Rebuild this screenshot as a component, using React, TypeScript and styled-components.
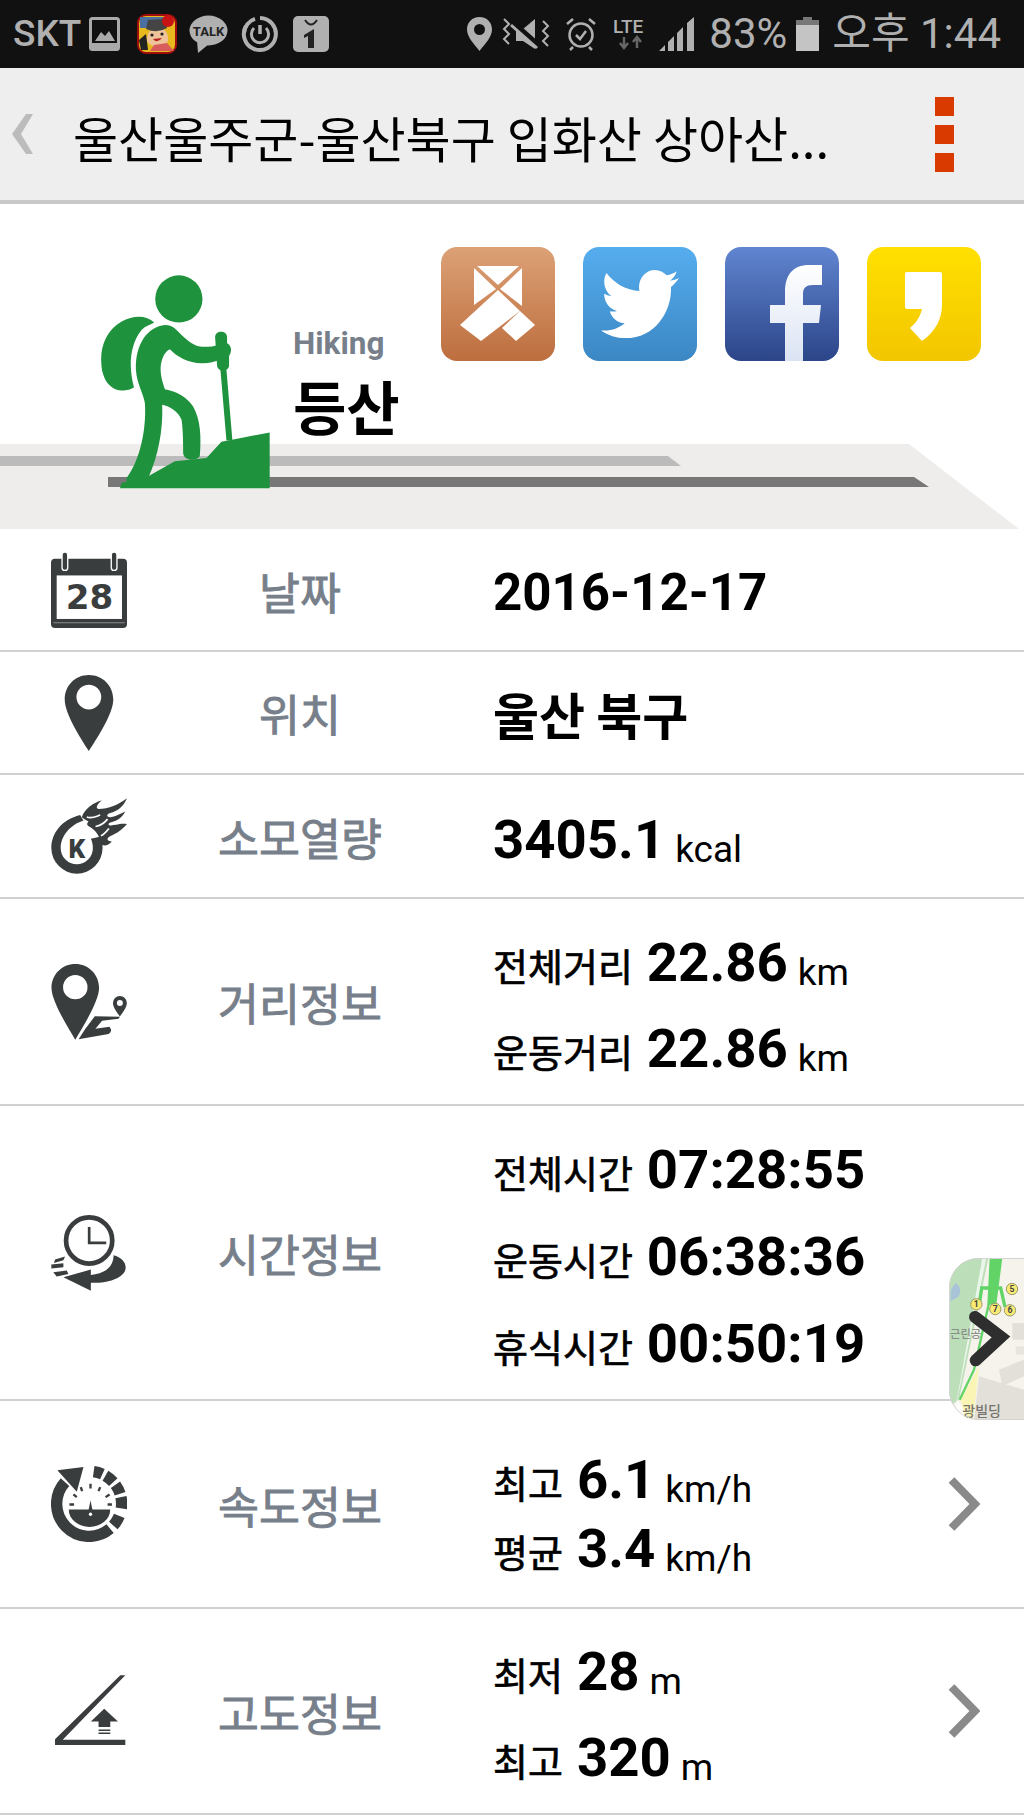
import React from "react";
import styled, { createGlobalStyle } from "styled-components";
import { FaTwitter } from "react-icons/fa";

const GlobalStyle = createGlobalStyle`
  html, body {
    margin: 0;
    padding: 0;
    background: #fff;
  }
  body {
    width: 1024px;
    height: 1820px;
    overflow: hidden;
    font-family: Roboto, "Noto Sans CJK KR", sans-serif;
  }
`;

const Page = styled.div`
  width: 1024px;
  height: 1820px;
  background: #fff;
  overflow: hidden;
`;

const StatusBar = styled.div`
  height: 68px;
  background: #111;
  display: flex;
  align-items: center;
  justify-content: space-between;
  padding: 0 23px 0 13px;
  box-sizing: border-box;
  color: #b0b0b0;
`;

const StatusGroup = styled.div`
  display: flex;
  align-items: center;
`;

const StatusText = styled.span<{ $ml?: number; $weight?: number; $size?: number }>`
  font-family: Roboto, "Noto Sans CJK KR", sans-serif;
  font-size: ${(p) => p.$size ?? 42}px;
  line-height: 68px;
  font-weight: ${(p) => p.$weight ?? 400};
  margin-left: ${(p) => p.$ml ?? 0}px;
  white-space: nowrap;
`;

const StatusIcon = styled.svg<{ $ml?: number }>`
  display: block;
  flex: none;
  overflow: visible;
  margin-left: ${(p) => p.$ml ?? 0}px;
`;

const Header = styled.header`
  height: 136px;
  box-sizing: border-box;
  background: #eee;
  border-bottom: 4px solid #c8c8c8;
  display: flex;
  align-items: center;
  padding: 0 70px 0 12px;
`;

const BackIcon = styled.svg`
  width: 21px;
  height: 40px;
  flex: none;
  margin-right: 40px;
`;

const Title = styled.h1`
  flex: 1;
  margin: 0;
  padding-top: 4px;
  font-family: "Noto Sans CJK KR", sans-serif;
  font-size: 49px;
  font-weight: 400;
  color: #000;
  white-space: nowrap;
`;

const MoreDots = styled.div`
  display: flex;
  flex-direction: column;
  gap: 9px;
`;

const MoreDot = styled.span`
  width: 19px;
  height: 19px;
  background: #d93a00;
`;

const Hero = styled.div`
  position: relative;
  height: 326px;
`;

const Ground = styled.svg`
  position: absolute;
  left: 0;
  bottom: 1px;
  width: 1024px;
  height: 85px;
`;

const HeroRow = styled.div`
  position: relative;
  display: flex;
  align-items: flex-start;
  padding: 0 43px 0 100px;
`;

const Hiker = styled.svg`
  width: 173px;
  height: 217px;
  margin-top: 69px;
  flex: none;
`;

const SportName = styled.div`
  margin: 121px 0 0 20px;
  display: flex;
  flex-direction: column;
  gap: 6px;
`;

const SportEn = styled.span`
  font-family: Roboto, sans-serif;
  font-size: 31.5px;
  line-height: 38px;
  font-weight: 700;
  color: #777f8a;
`;

const SportKo = styled.span`
  font-family: "Noto Sans CJK KR", sans-serif;
  font-size: 58px;
  line-height: 72px;
  font-weight: 700;
  color: #000;
`;

const Socials = styled.div`
  margin: 43px 0 0 auto;
  display: flex;
  gap: 28px;
`;

const Tile = styled.div<{ $top: string; $bottom: string }>`
  width: 114px;
  height: 114px;
  border-radius: 16px;
  overflow: hidden;
  display: flex;
  align-items: center;
  justify-content: center;
  background: linear-gradient(${(p) => p.$top}, ${(p) => p.$bottom});
`;

const TileArt = styled.svg`
  display: block;
  width: 114px;
  height: 114px;
`;

const TwitterBird = styled(FaTwitter)`
  display: block;
  width: 78px;
  height: 84px;
  color: #fff;
`;

const Row = styled.section<{ $h: number }>`
  position: relative;
  height: ${(p) => p.$h}px;
  box-sizing: border-box;
  border-bottom: 2px solid #d0d0d0;
  display: grid;
  grid-template-columns: 178px 244px 1fr auto;
  align-items: center;
`;

const IconCell = styled.div`
  display: flex;
  justify-content: center;
  align-items: center;
`;

const RowIcon = styled.svg`
  display: block;
  width: 76px;
  height: 76px;
`;

const Label = styled.div`
  text-align: center;
  font-family: "Noto Sans CJK KR", sans-serif;
  font-size: 44.5px;
  font-weight: 400;
  -webkit-text-stroke: 0.9px #777f8a;
  color: #777f8a;
`;

const Values = styled.div<{ $gap: number; $shift?: number }>`
  padding-left: 71px;
  padding-top: ${(p) => p.$shift ?? 6}px;
  display: flex;
  flex-direction: column;
  gap: ${(p) => p.$gap}px;
`;

const Line = styled.div`
  height: 60px;
  display: flex;
  align-items: baseline;
  line-height: 60px;
  white-space: nowrap;
`;

const Lead = styled.span`
  font-family: "Noto Sans CJK KR", sans-serif;
  font-size: 38px;
  font-weight: 400;
  -webkit-text-stroke: 0.7px #000;
  color: #000;
  margin-right: 14px;
`;

const Big = styled.span<{ $size?: number }>`
  font-family: Roboto, "Noto Sans CJK KR", sans-serif;
  font-size: ${(p) => p.$size ?? 54.5}px;
  font-weight: 700;
  color: #000;
`;

const Place = styled.span`
  font-family: "Noto Sans CJK KR", sans-serif;
  font-size: 50px;
  font-weight: 700;
  color: #000;
`;

const Unit = styled.span`
  font-family: Roboto, sans-serif;
  font-size: 37px;
  font-weight: 400;
  color: #000;
  margin-left: 10px;
  position: relative;
  top: 4px;
`;

const Chevron = styled.svg`
  display: block;
  width: 32px;
  height: 54px;
  margin-right: 44px;
`;

const MapThumb = styled.svg`
  position: absolute;
  right: 0;
  top: 152px;
  width: 75px;
  height: 162px;
`;

const ink = "#3a3d3e";

function StatusLeft() {
  return (
    <StatusGroup>
      <StatusText $weight={500} $size={37}>SKT</StatusText>
      <StatusIcon $ml={8} width="31" height="34" viewBox="0 0 31 34">
        <rect x="1.5" y="1.5" width="28" height="31" rx="2" fill="none" stroke="#aaa" strokeWidth="3" />
        <rect x="1" y="26" width="29" height="7" fill="#aaa" />
        <path d="M6 24 L12 15 L16 19 L20 14 L26 24 Z" fill="#aaa" />
      </StatusIcon>
      <StatusIcon $ml={17} width="40" height="40" viewBox="0 0 40 40">
        <rect x="1" y="1" width="38" height="38" rx="8" fill="#e7b91d" stroke="#a00d0d" strokeWidth="2" />
        <path d="M3 3 H30 V14 H3 Z" fill="#4a6fa0" />
        <path d="M2 26 L9 20 L11 36 H4 Z" fill="#222" />
        <path d="M10 27 Q10 14 21 14 Q32 15 31 27 Q28 33 20 33 Q13 32 10 27 Z" fill="#eec39a" />
        <path d="M9 15 L11 6 L27 5 L30 14 Q20 20 9 15 Z" fill="#444" />
        <path d="M13 37 L17 31 L30 29 L37 37 Z" fill="#d85c5c" />
        <circle cx="31" cy="7" r="6" fill="#c81414" />
        <path d="M16 25 Q20 30 25 24 Z" fill="#b42020" />
        <circle cx="15" cy="21" r="1.6" fill="#222" />
        <circle cx="25" cy="20" r="1.6" fill="#222" />
      </StatusIcon>
      <StatusIcon $ml={12} width="39" height="38" viewBox="0 0 39 38">
        <ellipse cx="19.5" cy="15.5" rx="19" ry="15" fill="#b0b0b0" />
        <path d="M8 25 L9 38 L20 29 Z" fill="#b0b0b0" />
        <text x="19.5" y="20.5" textAnchor="middle" fontFamily="Roboto, sans-serif" fontWeight="700" fontSize="13" fill="#222">
          TALK
        </text>
      </StatusIcon>
      <StatusIcon $ml={14} width="36" height="38" viewBox="0 0 36 38">
        <path d="M18 3 A16 16 0 1 1 4 11" fill="none" stroke="#b0b0b0" strokeWidth="4" />
        <path d="M2 18 A16 16 0 0 1 13 3.8" fill="none" stroke="#b0b0b0" strokeWidth="4" />
        <path d="M18 10 V19" stroke="#b0b0b0" strokeWidth="3.5" />
        <path d="M12 13 A8.6 8.6 0 1 0 24 13" fill="none" stroke="#b0b0b0" strokeWidth="3" />
      </StatusIcon>
      <StatusIcon $ml={15} width="36" height="36" viewBox="0 0 36 36">
        <rect width="36" height="36" rx="5" fill="#b0b0b0" />
        <path d="M12 4 Q18 13 24 4" fill="none" stroke="#222" strokeWidth="2" />
        <path d="M11 19 L21 13 V32 H15 V20 L11 22 Z" fill="#222" />
      </StatusIcon>
    </StatusGroup>
  );
}

function StatusRight() {
  return (
    <StatusGroup>
      <StatusIcon width="25" height="34" viewBox="0 0 25 34">
        <path fillRule="evenodd" d="M12.5 0 C20 0 25 5.5 25 12.5 C25 20 18 27 12.5 34 C7 27 0 20 0 12.5 C0 5.5 5 0 12.5 0 Z M12.5 7 A5.5 5.5 0 1 0 12.5 18 A5.5 5.5 0 1 0 12.5 7 Z" fill="#b0b0b0" />
      </StatusIcon>
      <StatusIcon $ml={10} width="52" height="34" viewBox="0 0 52 34">
        <path d="M2 2 L7 7 L2 12 L7 17 L2 22 L7 27" fill="none" stroke="#b0b0b0" strokeWidth="2" />
        <path d="M14 12 H21 L33 2 V32 L21 24 H14 Z" fill="#b0b0b0" />
        <path d="M11 6 L38 30" stroke="#111" strokeWidth="6" />
        <path d="M9 8 L35 31" stroke="#b0b0b0" strokeWidth="3" />
        <path d="M41 4 L46 9 L41 14 L46 19 L41 24 L46 29" fill="none" stroke="#b0b0b0" strokeWidth="2" />
      </StatusIcon>
      <StatusIcon $ml={12} width="30" height="34" viewBox="0 0 30 34">
        <circle cx="15" cy="18" r="11.5" fill="none" stroke="#b0b0b0" strokeWidth="2.5" />
        <path d="M10 18 L14 22 L20 14" fill="none" stroke="#b0b0b0" strokeWidth="2.5" />
        <path d="M1 7 L7 2 M29 7 L23 2 M7 30 L4 33 M23 30 L26 33" stroke="#b0b0b0" strokeWidth="2.5" />
      </StatusIcon>
      <StatusIcon $ml={17} width="37" height="34" viewBox="0 0 37 34">
        <text x="0" y="16" fontFamily="Roboto, sans-serif" fontWeight="500" fontSize="19" fill="#b0b0b0">
          LTE
        </text>
        <path d="M11 20 V29 M7 26 L11 31 L15 26" fill="none" stroke="#666" strokeWidth="2.5" />
        <path d="M24 31 V22 M20 25 L24 20 L28 25" fill="none" stroke="#666" strokeWidth="2.5" />
      </StatusIcon>
      <StatusIcon $ml={9} width="35" height="34" viewBox="0 0 35 34">
        <path d="M0 34 L6 28 V34 Z M9 25 L15 19 V34 H9 Z M18 16 L24 10 V34 H18 Z M28 6 L35 0 V34 H28 Z" fill="#b0b0b0" />
      </StatusIcon>
      <StatusText $ml={15}>83%</StatusText>
      <StatusIcon $ml={9} width="23" height="34" viewBox="0 0 23 34">
        <rect x="7" y="0" width="9" height="4" fill="#777" />
        <rect x="0" y="3" width="23" height="5" fill="#777" />
        <rect x="0" y="8" width="23" height="26" fill="#c4c4c4" />
      </StatusIcon>
      <StatusText $ml={13}>오후 1:44</StatusText>
    </StatusGroup>
  );
}

function HikerArt() {
  return (
    <Hiker viewBox="300 130 520 650">
      <g fill="#1f923d">
        <circle cx="537" cy="207" r="71" />
        <path d="M463 278 C440 255 400 255 365 275 C320 300 300 350 304 400 C305 440 325 480 365 482 C380 482 395 478 402 472 C388 420 385 350 425 300 C435 290 450 285 463 278 Z" />
        <path d="M495 285 C445 290 405 340 408 420 C410 460 430 490 435 520 C440 600 420 690 380 745 L380 760 L445 745 C475 680 490 600 487 525 C510 530 535 545 545 570 C550 600 550 650 550 670 C552 695 590 695 600 680 C605 620 602 570 580 530 C560 500 530 485 495 478 C485 450 478 420 485 395 C490 375 500 362 510 358 C530 380 570 402 610 400 C630 400 645 395 655 392 L655 345 C640 350 620 352 600 350 C575 345 550 320 530 300 C520 290 510 285 495 285 Z" />
        <path d="M662 420 L680 420 L698 632 L680 632 Z" />
        <path d="M646 322 C646 300 682 300 682 322 L682 340 C692 345 700 360 688 378 L688 408 C685 428 655 428 652 408 L650 380 Z" />
        <path d="M810 608 L810 776 L360 776 L365 760 L445 740 L525 695 L620 685 L665 636 L697 630 Z" />
      </g>
    </Hiker>
  );
}

function RibbonArt() {
  return (
    <TileArt viewBox="0 0 114 114">
      <g fill="#fff">
        <path d="M36 19 H78 L57 38 Z" />
        <path d="M33 21 L55 42 L33 58 Z" />
        <path d="M81 21 V59 L59 42 Z" />
        <path d="M19 78 L57 43 L79 64 L40 94 Z" />
        <path d="M61 81 L79 64 L94 78 L75 94 Z" />
      </g>
    </TileArt>
  );
}

function FacebookArt() {
  return (
    <TileArt viewBox="0 0 114 114">
      <defs>
        <linearGradient id="fbf" x1="0" y1="0" x2="0" y2="1">
          <stop offset="0" stopColor="#fff" />
          <stop offset="1" stopColor="#dbe3f3" />
        </linearGradient>
      </defs>
      <path fill="url(#fbf)" d="M60 114 V76 H45 V58 H60 V44 C60 28 68 18 84 18 H97 V38 H88 C81 38 78 41 78 47 V58 H96 L94 76 H78 V114 Z" />
    </TileArt>
  );
}

function KakaoArt() {
  return (
    <TileArt viewBox="0 0 114 114">
      <path fill="#fff" d="M38 27 Q38 25 40 25 H73 Q75 25 75 27 V58 C75 72 68 85 55 94 L43 81 C49 76 53 70 55 62 H40 Q38 62 38 60 Z" />
    </TileArt>
  );
}

function arcPath(from: number, to: number, r = 97, cx = 177, cy = 188) {
  const a = (from * Math.PI) / 180;
  const b = (to * Math.PI) / 180;
  const p = (n: number) => n.toFixed(1);
  return `M${p(cx + r * Math.cos(a))} ${p(cy + r * Math.sin(a))} A${r} ${r} 0 0 1 ${p(cx + r * Math.cos(b))} ${p(cy + r * Math.sin(b))}`;
}

function CalendarIcon() {
  return (
    <RowIcon viewBox="63 35 227 227">
      <rect x="63" y="55" width="227" height="207" rx="12" fill={ink} />
      <rect x="80" y="105" width="195" height="130" fill="#fff" />
      <path d="M70 246 H283" stroke="#8a8c8d" strokeWidth="3" />
      <rect x="96" y="35" width="17" height="55" rx="8" fill={ink} stroke="#fff" strokeWidth="4" />
      <rect x="243" y="35" width="17" height="55" rx="8" fill={ink} stroke="#fff" strokeWidth="4" />
      <text x="178" y="206" textAnchor="middle" fontFamily="'DejaVu Sans', sans-serif" fontWeight="700" fontSize="102" fill={ink}>
        28
      </text>
    </RowIcon>
  );
}

function PinIcon() {
  return (
    <RowIcon viewBox="60 405 227 227">
      <path fillRule="evenodd" fill={ink} d="M173 405 C215 405 246 438 246 478 C246 520 200 590 173 632 C146 590 101 520 101 478 C101 438 131 405 173 405 Z M173 434 A37 37 0 1 0 173 508 A37 37 0 1 0 173 434 Z" />
    </RowIcon>
  );
}

function FireIcon() {
  return (
    <RowIcon viewBox="63 775 227 227">
      <path fillRule="evenodd" fill={ink} d="M140 1001 A77 77 0 0 1 64 925 C64 880 95 840 150 826 L160 842 C120 855 92 888 92 925 A48 48 0 0 0 188 925 C188 915 186 905 182 897 L212 890 C216 900 217 912 217 925 A77 77 0 0 1 140 1001 Z" />
      <path fill={ink} d="M155 832 C165 805 190 790 215 782 C200 795 195 805 205 808 C235 808 265 795 290 776 C280 800 262 815 240 820 C225 825 230 835 245 832 C260 828 272 820 285 815 C275 835 255 845 240 848 C230 852 235 860 250 856 C265 853 278 850 290 853 C272 875 250 885 235 892 C225 900 240 905 245 905 C235 915 225 920 215 915 C210 895 200 875 185 865 C175 858 165 855 175 845 C165 840 160 838 155 832 Z" />
      <path d="M170 832 C185 838 198 830 210 826 M196 860 C210 858 222 850 232 838 M212 888 C222 884 228 876 236 866" fill="none" stroke="#fff" strokeWidth="5" />
      <text x="140" y="953" textAnchor="middle" fontFamily="Roboto, sans-serif" fontWeight="900" fontSize="78" fill={ink}>
        K
      </text>
    </RowIcon>
  );
}

function RouteIcon() {
  return (
    <RowIcon viewBox="63 38 227 230">
      <path fillRule="evenodd" fill={ink} d="M135 38 C175 38 207 70 207 110 C207 150 160 225 135 267 C110 225 63 150 63 110 C63 70 95 38 135 38 Z M135 71 A37 37 0 1 0 135 145 A37 37 0 1 0 135 71 Z" />
      <path fillRule="evenodd" fill={ink} d="M270 135 A21 21 0 0 1 291 156 C291 170 278 185 270 197 C262 185 249 170 249 156 A21 21 0 0 1 270 135 Z M270 147 A9 9 0 1 0 270 165 A9 9 0 1 0 270 147 Z" />
      <path fill={ink} d="M145 266 L236 250 Q250 240 238 228 L196 234 L216 210 L266 204 L270 198 L194 196 L164 236 Z" />
    </RowIcon>
  );
}

function ClockIcon() {
  return (
    <RowIcon viewBox="63 72 227 227">
      <circle cx="177" cy="148" r="69" fill="none" stroke={ink} strokeWidth="14" />
      <path d="M177 108 V155 H228" fill="none" stroke={ink} strokeWidth="8" />
      <path fill={ink} d="M100 258 L182 235 L182 251 C225 248 250 225 250 192 C285 200 300 235 270 255 C245 272 210 276 182 274 L182 298 Z" />
      <path fill={ink} d="M75 205 L105 196 L100 207 L72 215 Z M64 220 L100 216 L100 228 L64 232 Z M70 243 L110 238 L115 248 L80 256 Z" />
    </RowIcon>
  );
}

function SpeedIcon() {
  const blocks: [number, number][] = [
    [-82, -66],
    [-60, -42],
    [-36, -18],
    [-12, 8],
    [22, 42],
  ];
  return (
    <RowIcon viewBox="63 75 227 227">
      <path d={arcPath(50, 222)} fill="none" stroke={ink} strokeWidth="34" />
      <path d="M82 88 L160 78 L140 152 Z" fill={ink} />
      {blocks.map(([a, b]) => (
        <path key={a} d={arcPath(a, b)} fill="none" stroke={ink} strokeWidth="34" />
      ))}
      <path fillRule="evenodd" fill={ink} d="M116 205 H240 A62 52 0 0 1 116 205 Z" />
      <path d="M181 178 L172 222 H190 Z" fill={ink} />
      <circle cx="181" cy="219" r="5" fill="#fff" />
      <path d="M118 190 H132 M130 160 L140 168 M152 138 L156 150 M181 128 V142 M210 138 L205 150 M238 160 L226 168 M245 190 H232" stroke={ink} strokeWidth="7" />
    </RowIcon>
  );
}

function SlopeIcon() {
  return (
    <RowIcon viewBox="63 705 227 227">
      <path fill={ink} d="M75 903 L270 712 H285 L98 904 H285 V920 H75 Z" />
      <path fill={ink} d="M222 812 L263 850 H240 V866 H205 V850 H182 Z" />
      <path d="M205 876 H240 M205 885 H240" stroke={ink} strokeWidth="5" />
    </RowIcon>
  );
}

function ChevronIcon() {
  return (
    <Chevron viewBox="0 0 32 54">
      <path d="M3.5 3 L27 27 L3.5 51" fill="none" stroke="#8a8a8a" strokeWidth="8" />
    </Chevron>
  );
}

function MapArt() {
  return (
    <MapThumb viewBox="150 85 225 486">
      <defs>
        <clipPath id="mapClip">
          <path d="M240 85 H375 V571 H240 C190 571 150 530 150 480 V175 C150 125 190 85 240 85 Z" />
        </clipPath>
      </defs>
      <g clipPath="url(#mapClip)">
        <rect x="150" y="85" width="225" height="486" fill="#f5f3ec" />
        <path d="M150 85 H268 L180 510 L150 530 Z" fill="#bcdfba" />
        <path d="M170 160 Q190 170 180 200 L155 215 V180 Z" fill="#a9c4d8" />
        <path d="M262 85 L175 510 L215 571 H180 L170 530 L250 85 Z" fill="#fff" opacity="0.7" />
        <path d="M240 410 L185 510 L200 571 H222 Z" fill="#fbf5b5" />
        <path d="M340 280 H375 V330 H340 Z M300 420 L375 390 V440 L310 470 Z M240 440 L375 480 V571 H225 Z" fill="#e3e0d9" />
        <path d="M350 350 H375 V375 H350 Z" fill="#e8e5de" />
        <path d="M272 85 H310 L292 225 H265 Z" fill="#62d467" />
        <path d="M240 232 L248 175 H305 L318 232" fill="none" stroke="#62d467" strokeWidth="10" />
        <path d="M270 220 L225 420 L182 510" fill="none" stroke="#62d467" strokeWidth="7" />
        {[
          ["1", 232, 224],
          ["7", 289, 238],
          ["6", 333, 242],
          ["5", 339, 178],
        ].map(([n, x, y]) => (
          <g key={n as string}>
            <circle cx={x} cy={y} r="17" fill="#f8ea72" stroke="#9a9a6a" strokeWidth="3" />
            <text x={x} y={Number(y) + 9} textAnchor="middle" fontFamily="Roboto, sans-serif" fontWeight="700" fontSize="26" fill="#444">
              {n}
            </text>
          </g>
        ))}
        <text x="153" y="325" fontFamily="'Noto Sans CJK KR', sans-serif" fontSize="34" fontWeight="500" fill="#8a8f89">
          근린공
        </text>
        <text x="190" y="558" fontFamily="'Noto Sans CJK KR', sans-serif" fontSize="42" fontWeight="500" fill="#77756f">
          광빌딩
        </text>
        <path d="M228 262 L306 322 L230 392" fill="none" stroke="#2e2e2e" strokeWidth="36" strokeLinecap="round" strokeLinejoin="miter" />
      </g>
      <path d="M240 86.5 H375 M375 569.5 H240 C190 569.5 151.5 530 151.5 480 V175 C151.5 125 190 86.5 240 86.5" fill="none" stroke="#d4d4d4" strokeWidth="3" />
    </MapThumb>
  );
}

type Stat = { lead: string; big: string; unit?: string };

const Stats = ({ lines, gap, shift }: { lines: Stat[]; gap: number; shift?: number }) => (
  <Values $gap={gap} $shift={shift}>
    {lines.map((l) => (
      <Line key={l.lead}>
        <Lead>{l.lead}</Lead>
        <Big>{l.big}</Big>
        {l.unit && <Unit>{l.unit}</Unit>}
      </Line>
    ))}
  </Values>
);

export default function App() {
  return (
    <Page>
      <GlobalStyle />
      <StatusBar>
        <StatusLeft />
        <StatusRight />
      </StatusBar>
      <Header>
        <BackIcon viewBox="0 0 21 40">
          <path d="M14 0 H21 L9 20 L21 40 H14 L0 20 Z" fill="#bcbcbc" />
        </BackIcon>
        <Title>울산울주군-울산북구 입화산 상아산...</Title>
        <MoreDots>
          <MoreDot />
          <MoreDot />
          <MoreDot />
        </MoreDots>
      </Header>
      <Hero>
        <Ground viewBox="0 444 1024 85">
          <path d="M0 444 H909 L1019 529 H0 Z" fill="#eeedeb" />
          <path d="M0 456 H668 L681 466 H0 Z" fill="#bbb" />
          <path d="M108 477 H914 L929 487 H108 Z" fill="#777" />
        </Ground>
        <HeroRow>
          <HikerArt />
          <SportName>
            <SportEn>Hiking</SportEn>
            <SportKo>등산</SportKo>
          </SportName>
          <Socials>
            <Tile $top="#dca176" $bottom="#bd6e3e">
              <RibbonArt />
            </Tile>
            <Tile $top="#56adee" $bottom="#3b87c4">
              <TwitterBird preserveAspectRatio="none" />
            </Tile>
            <Tile $top="#6085d0" $bottom="#2c4589">
              <FacebookArt />
            </Tile>
            <Tile $top="#ffe000" $bottom="#f3c600">
              <KakaoArt />
            </Tile>
          </Socials>
        </HeroRow>
      </Hero>

      <Row $h={122}>
        <IconCell>
          <CalendarIcon />
        </IconCell>
        <Label>날짜</Label>
        <Values $gap={0}>
          <Line>
            <Big $size={51}>2016-12-17</Big>
          </Line>
        </Values>
      </Row>
      <Row $h={123}>
        <IconCell>
          <PinIcon />
        </IconCell>
        <Label>위치</Label>
        <Values $gap={0} $shift={0}>
          <Line>
            <Place>울산 북구</Place>
          </Line>
        </Values>
      </Row>
      <Row $h={124}>
        <IconCell>
          <FireIcon />
        </IconCell>
        <Label>소모열량</Label>
        <Values $gap={0}>
          <Line>
            <Big>3405.1</Big>
            <Unit>kcal</Unit>
          </Line>
        </Values>
      </Row>
      <Row $h={207}>
        <IconCell>
          <RouteIcon />
        </IconCell>
        <Label>거리정보</Label>
        <Stats
          gap={26}
          lines={[
            { lead: "전체거리", big: "22.86", unit: "km" },
            { lead: "운동거리", big: "22.86", unit: "km" },
          ]}
        />
      </Row>
      <Row $h={295}>
        <IconCell>
          <ClockIcon />
        </IconCell>
        <Label>시간정보</Label>
        <Stats
          gap={27}
          lines={[
            { lead: "전체시간", big: "07:28:55" },
            { lead: "운동시간", big: "06:38:36" },
            { lead: "휴식시간", big: "00:50:19" },
          ]}
        />
        <MapArt />
      </Row>
      <Row $h={208}>
        <IconCell>
          <SpeedIcon />
        </IconCell>
        <Label>속도정보</Label>
        <Stats
          gap={9}
          shift={19}
          lines={[
            { lead: "최고", big: "6.1", unit: "km/h" },
            { lead: "평균", big: "3.4", unit: "km/h" },
          ]}
        />
        <ChevronIcon />
      </Row>
      <Row $h={206}>
        <IconCell>
          <SlopeIcon />
        </IconCell>
        <Label>고도정보</Label>
        <Stats
          gap={26}
          lines={[
            { lead: "최저", big: "28", unit: "m" },
            { lead: "최고", big: "320", unit: "m" },
          ]}
        />
        <ChevronIcon />
      </Row>
    </Page>
  );
}
